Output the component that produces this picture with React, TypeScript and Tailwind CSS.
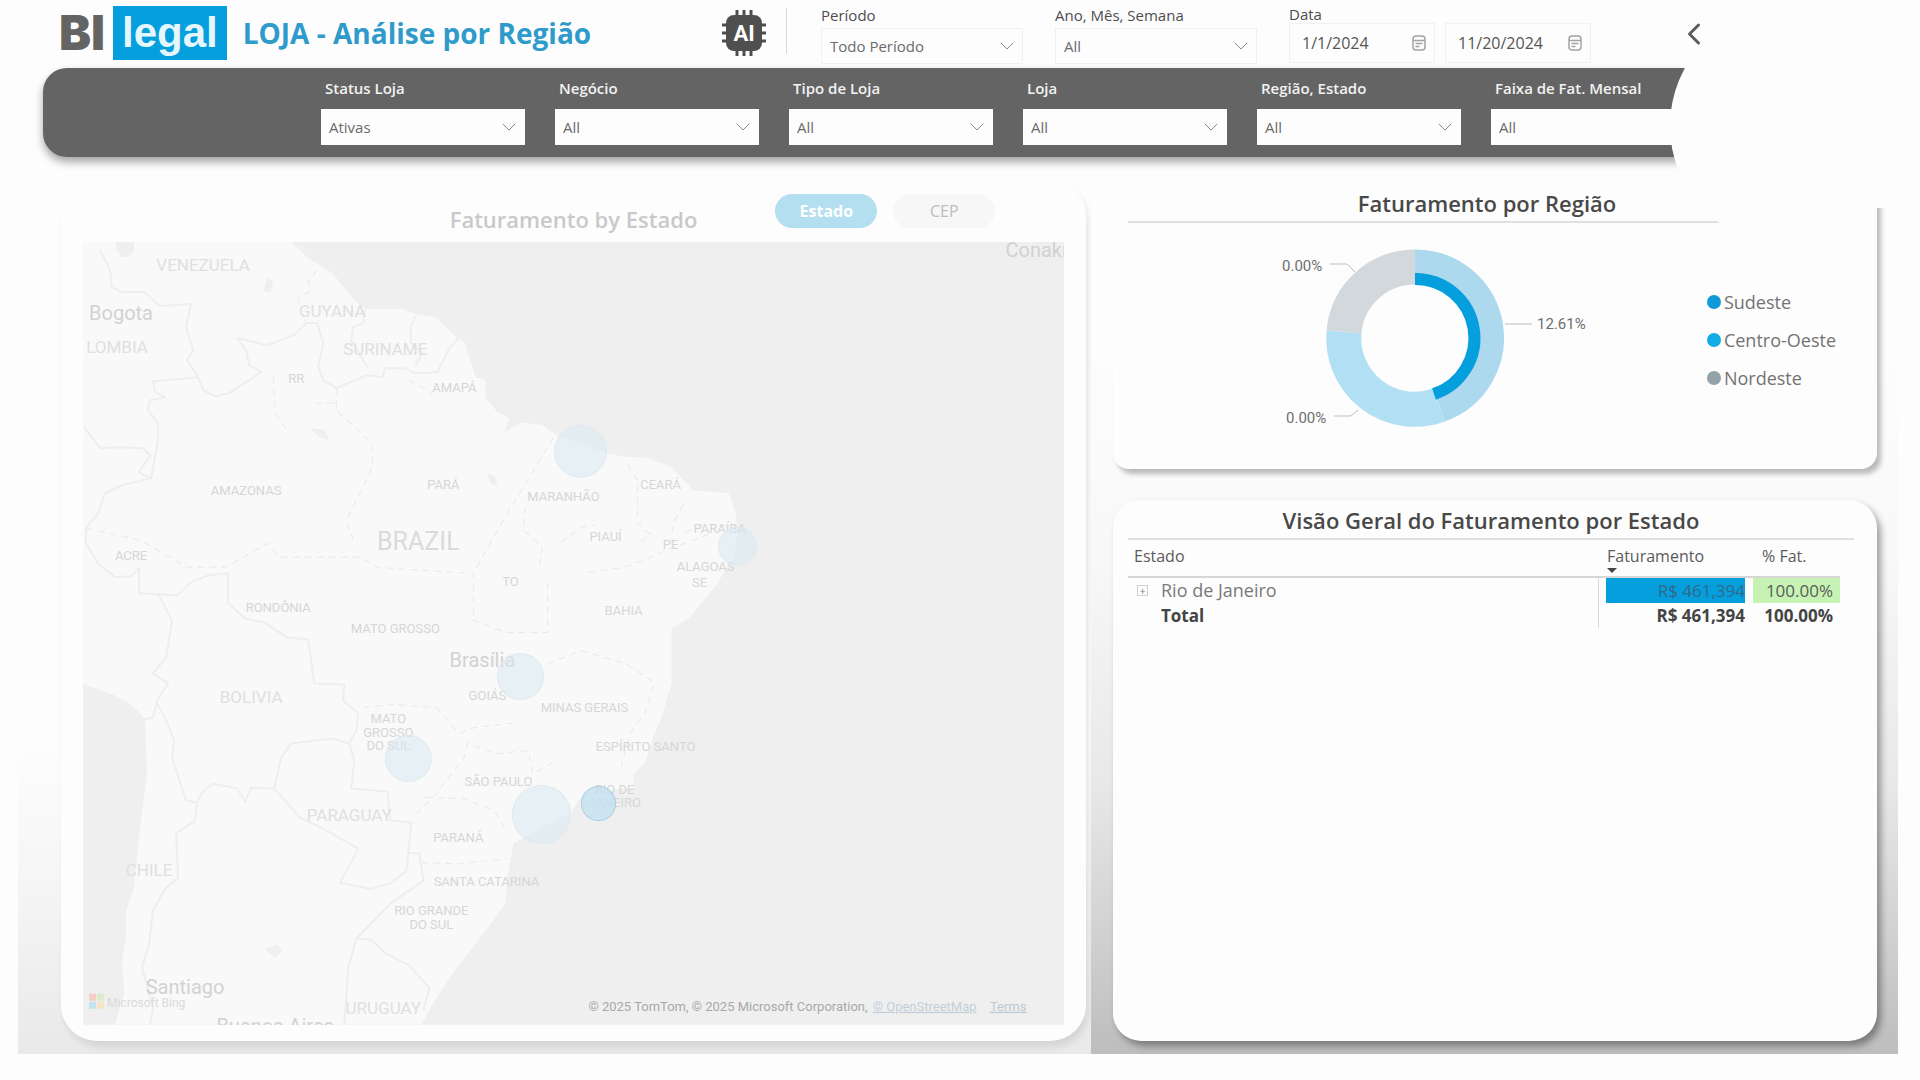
import { ChevronDown, ChevronLeft } from "lucide-react";
import { useState } from "react";

type MapLabel = {
    text: string;
    x: number;
    y: number;
    size: "city" | "country" | "nation" | "state";
};

const storeFilters = [
    { id: "status", label: "Status Loja", value: "Ativas" },
    { id: "negocio", label: "Negócio", value: "All" },
    { id: "tipo", label: "Tipo de Loja", value: "All" },
    { id: "loja", label: "Loja", value: "All" },
    { id: "regiao", label: "Região, Estado", value: "All" },
    { id: "faixa", label: "Faixa de Fat. Mensal", value: "All" },
];

const periodFilters = [
    { id: "periodo", label: "Período", value: "Todo Período" },
    { id: "ano", label: "Ano, Mês, Semana", value: "All" },
];

const legend = [
    { name: "Sudeste", color: "bg-[#0f9bd7]" },
    { name: "Centro-Oeste", color: "bg-[#12abe3]" },
    { name: "Nordeste", color: "bg-[#93a1a9]" },
];

const labelStyles = {
    city: "fill-[#d2d2d2] text-[20px]",
    nation: "fill-[#dadada] text-[25px]",
    country: "fill-[#e0e0e0] text-[17px]",
    state: "fill-[#d6d6d6] text-[13px]",
};

// x is the middle of the label, y its baseline
const mapLabels: MapLabel[] = [
    { text: "VENEZUELA", x: 120, y: 29, size: "country" },
    { text: "Bogota", x: 38, y: 78, size: "city" },
    { text: "LOMBIA", x: 34, y: 111, size: "country" },
    { text: "GUYANA", x: 249, y: 75, size: "country" },
    { text: "SURINAME", x: 302, y: 113, size: "country" },
    { text: "RR", x: 213, y: 141, size: "state" },
    { text: "AMAPÁ", x: 371, y: 150, size: "state" },
    { text: "AMAZONAS", x: 163, y: 253, size: "state" },
    { text: "PARÁ", x: 360, y: 247, size: "state" },
    { text: "MARANHÃO", x: 480, y: 259, size: "state" },
    { text: "CEARÁ", x: 577, y: 247, size: "state" },
    { text: "PARAÍBA", x: 636, y: 291, size: "state" },
    { text: "PIAUÍ", x: 522, y: 299, size: "state" },
    { text: "PE", x: 587, y: 307, size: "state" },
    { text: "ALAGOAS", x: 622, y: 329, size: "state" },
    { text: "SE", x: 616, y: 345, size: "state" },
    { text: "BAHIA", x: 540, y: 373, size: "state" },
    { text: "BRAZIL", x: 335, y: 308, size: "nation" },
    { text: "ACRE", x: 48, y: 318, size: "state" },
    { text: "TO", x: 427, y: 344, size: "state" },
    { text: "RONDÔNIA", x: 195, y: 370, size: "state" },
    { text: "MATO GROSSO", x: 312, y: 391, size: "state" },
    { text: "Brasília", x: 399, y: 425, size: "city" },
    { text: "GOIÁS", x: 404, y: 458, size: "state" },
    { text: "MINAS GERAIS", x: 501, y: 470, size: "state" },
    { text: "BOLIVIA", x: 168, y: 461, size: "country" },
    { text: "MATO", x: 305, y: 481, size: "state" },
    { text: "GROSSO", x: 305, y: 494, size: "state" },
    { text: "DO SUL", x: 305, y: 507, size: "state" },
    { text: "ESPÍRITO SANTO", x: 562, y: 508, size: "state" },
    { text: "SÃO PAULO", x: 415, y: 543, size: "state" },
    { text: "RIO DE", x: 531, y: 551, size: "state" },
    { text: "JANEIRO", x: 531, y: 564, size: "state" },
    { text: "PARAGUAY", x: 266, y: 578, size: "country" },
    { text: "PARANÁ", x: 375, y: 599, size: "state" },
    { text: "CHILE", x: 66, y: 633, size: "country" },
    { text: "SANTA CATARINA", x: 403, y: 643, size: "state" },
    { text: "RIO GRANDE", x: 348, y: 672, size: "state" },
    { text: "DO SUL", x: 348, y: 686, size: "state" },
    { text: "Santiago", x: 102, y: 751, size: "city" },
    { text: "URUGUAY", x: 300, y: 771, size: "country" },
    { text: "Buenos Aires", x: 192, y: 790, size: "city" },
    { text: "Conakry", x: 958, y: 15, size: "city" },
];

const countryBorders = [
    "M17 8 27 28 29 45 39 50 61 50 77 64 108 62 103 85 110 108 104 118 115 135 120 148 132 154 146 151 166 138 178 130 166 123 163 108 154 96 184 103 211 93 223 81 234 81 240 101 235 125 240 138 253 146 284 133 299 135 302 126 321 126 332 131 354 130 366 106 375 96",
    "M282 67 280 81 270 85 268 98 284 125",
    "M333 73 327 85 328 101 339 111 332 124",
    "M115 135 104 136 70 139 72 150 82 155 67 158 65 168 75 181 75 198 68 236 56 230 67 213 60 206 36 205 17 206 1 185",
    "M68 236 39 243 22 251 15 271 3 286 3 301 15 321 32 335 48 334 56 326 56 351 94 353 108 340 125 333 145 331 145 361 162 376 181 380 204 395 225 397 231 441 261 442 260 458 275 471 273 488 266 501 271 518 268 546 304 549 307 578 328 580 325 610 323 628 307 641 287 646 257 640 275 606 238 585 217 575 191 546 198 515 208 501 248 496 266 501",
    "M76 353 89 378 83 415 70 431 85 441 74 458 70 475 62 477",
    "M74 461 82 475 91 498 89 515 103 558 114 560 118 551 129 541 154 546 162 559 168 545 191 546",
    "M114 560 112 578 93 591 95 635 82 646 70 668 66 701 59 725 70 765 67 782",
    "M325 610 336 611 340 638 307 661 273 696 265 725 261 782",
    "M273 696 288 697 303 711 326 723 346 745 340 768",
];

const stateBorders = [
    "M234 28 225 40 227 49 215 56 218 71 223 81",
    "M253 146 253 168 289 201 289 225 263 278 270 298",
    "M3 286 58 298 104 325 142 325 184 301 197 315 277 315 294 325 387 331",
    "M190 135 192 171 204 188 M232 161 253 161",
    "M325 138 345 148 352 160",
    "M470 195 452 225 418 281 390 331 390 378 422 390 464 390 464 341",
    "M442 265 440 288 459 305 456 325 M477 300 500 284 512 283",
    "M544 222 554 238 554 281 567 292 556 300",
    "M600 262 590 280 588 300 M602 290 620 282 652 284",
    "M505 330 540 325 560 318 585 307 630 290",
    "M464 421 491 411 496 408 542 421 571 440 561 471 546 491 538 525",
    "M280 465 310 462 353 465 376 491 391 485 434 480",
    "M376 521 353 551 334 570 M342 555 380 556 411 568 424 590",
    "M380 518 384 501 414 511 445 508 449 531 470 520",
    "M338 620 376 621 424 616",
];

const bubbles = [
    { x: 497, y: 209, r: 26 },
    { x: 654, y: 304, r: 19 },
    { x: 437, y: 434, r: 23 },
    { x: 325, y: 516, r: 23 },
    { x: 458, y: 572, r: 29 },
];

function Logo() {
    return (
        <div className="flex items-center gap-2 font-bold">
            <span className="font-['Inter',sans-serif] text-[48px] leading-[54px] font-black text-[#646464]">
                BI
            </span>
            <span className="bg-[#069fdd] px-[9px] font-['Liberation_Sans',sans-serif] text-[42px] leading-[54px] text-[#e6f6fd]">
                legal
            </span>
        </div>
    );
}

function ChipIcon() {
    return (
        <svg viewBox="0 0 44 46" className="h-[46px] w-11 shrink-0">
            <path
                d="M15 0v46M22 0v46M29 0v46M0 15h44M0 23h44M0 31h44"
                className="stroke-[#4f4f4f]"
                strokeWidth="3"
            />
            <rect x="4" y="5" width="36" height="36" rx="8" className="fill-[#4f4f4f]" />
            <text
                x="22"
                y="31"
                textAnchor="middle"
                className="fill-white font-['Roboto',sans-serif] text-[22px] font-bold"
            >
                AI
            </text>
        </svg>
    );
}

function CalendarIcon() {
    return (
        <svg viewBox="0 0 16 16" fill="none" className="size-4 shrink-0 stroke-[#a3a3a3]">
            <rect x="2" y="1" width="12" height="14" rx="3" strokeWidth="1.5" />
            <path d="M2 5.5h12M4.500 8.500h7M4.500 11.500h4" strokeWidth="1.5" />
        </svg>
    );
}

function FilterSelect({
    id,
    label,
    value,
    dark = false,
}: {
    id: string;
    label: string;
    value: string;
    dark?: boolean;
}) {
    return (
        <div className={dark ? "w-[204px] shrink-0" : "w-[202px] shrink-0"}>
            <label
                htmlFor={id}
                className={
                    dark
                        ? "block pl-1 text-[15px] leading-5 font-semibold text-[#f2f2f2]"
                        : "block text-[15px] leading-5 text-[#4d4d4d]"
                }
            >
                {label}
            </label>
            <div className={dark ? "mt-[11px] grid items-center" : "mt-[3px] grid items-center"}>
                <select
                    id={id}
                    className={
                        dark
                            ? "col-start-1 row-start-1 h-9 appearance-none bg-[#fdfdfd] px-2 text-[15px] text-[#6b6b6b]"
                            : "col-start-1 row-start-1 h-9 appearance-none border border-[#f1f1f1] bg-[#fdfdfd] px-2 text-[15px] text-[#6b6b6b]"
                    }
                >
                    <option>{value}</option>
                </select>
                <ChevronDown
                    strokeWidth={1}
                    className="pointer-events-none col-start-1 row-start-1 mr-1 size-6 justify-self-end text-[#8a8a8a]"
                />
            </div>
        </div>
    );
}

function DateInput({ label, value }: { label: string; value: string }) {
    return (
        <div className="flex h-10 w-[146px] items-center border border-[#f1f1f1] pr-[7px] pl-3">
            <input
                aria-label={label}
                defaultValue={value}
                className="w-full min-w-0 bg-transparent text-[16px] text-[#555]"
            />
            <CalendarIcon />
        </div>
    );
}

function SalesMap() {
    return (
        <svg viewBox="0 0 980 782" className="w-full font-['Roboto',sans-serif]">
            <rect width="980" height="782" className="fill-[#efefef]" />
            <path
                d="M0 0H208L225 16 249 31 273 60 282 67 318 67 337 73 352 75 373 95 382 101 392 135 402 138 402 155 414 170 426 176 421 190 438 180 459 183 473 193 523 211 545 215 563 215 588 225 609 248 645 251 652 271 654 291 650 315 631 345 606 375 588 386 588 441 578 475 571 491 561 521 550 531 550 545 500 550 487 571 453 588 430 601 424 635 422 661 397 695 369 731 353 755 338 782H32L41 751 39 718 43 695 43 668 51 645 57 585 64 531 62 485 62 476 48 462 32 453 0 441Z"
                className="fill-[#f9f9f9]"
            />
            <path
                d="M33 0h18v9l-6 6h-6l-6-7zM184 36l6 3-3 12-7-2zM228 186l14 2 4 10-12-4zM404 231l8 4 2 9-7-3zM181 706l12-4 7 5-8 8z"
                className="fill-[#efefef]"
            />
            {countryBorders.map((d) => (
                <path key={d} d={d} fill="none" strokeWidth="2" strokeLinejoin="round" className="stroke-[#eeeeee]" />
            ))}
            {stateBorders.map((d) => (
                <path key={d} d={d} fill="none" strokeWidth="1" strokeDasharray="7 5" className="stroke-[#e9e9e9]" />
            ))}
            {mapLabels.map((label) => (
                <text
                    key={`${label.text}-${label.y}`}
                    x={label.x}
                    y={label.y}
                    textAnchor="middle"
                    className={labelStyles[label.size]}
                >
                    {label.text}
                </text>
            ))}
            {bubbles.map((b) => (
                <circle
                    key={b.x}
                    cx={b.x}
                    cy={b.y}
                    r={b.r}
                    className="fill-[#d9e9f1]/55 stroke-[#dfeaf0]"
                />
            ))}
            <circle cx="515" cy="561" r="17" className="fill-[#c4e1f1]/80 stroke-[#aacfe4]" />
            <g>
                <rect x="6" y="751" width="7" height="7" className="fill-[#f6cfc8]" />
                <rect x="14" y="751" width="7" height="7" className="fill-[#dcebcb]" />
                <rect x="6" y="759" width="7" height="7" className="fill-[#c3e3f4]" />
                <rect x="14" y="759" width="7" height="7" className="fill-[#f8e3c4]" />
                <text x="24" y="764" className="fill-[#d9d9d9] text-[12px]">
                    Microsoft Bing
                </text>
            </g>
            <text x="505" y="768" className="fill-[#a9a9a9] text-[13px]">
                © 2025 TomTom, © 2025 Microsoft Corporation,
            </text>
            <a href="#osm">
                <text x="789" y="768" className="fill-[#c3cfd8] text-[13px] underline">
                    © OpenStreetMap
                </text>
            </a>
            <a href="#terms">
                <text x="906" y="768" className="fill-[#bccad4] text-[13px] underline">
                    Terms
                </text>
            </a>
        </svg>
    );
}

function RegionDonut() {
    return (
        <svg viewBox="0 0 340 190" className="w-[340px] shrink-0 text-[15px]">
            <g transform="translate(149 96)" fill="none">
                <path d="M0 -71A71 71 0 0 1 24 67" strokeWidth="35" className="stroke-[#acd9ee]" />
                <path d="M24 67A71 71 0 0 1 -71 -6" strokeWidth="35" className="stroke-[#b1dff3]" />
                <path d="M-71 -6A71 71 0 0 1 0 -71" strokeWidth="35" className="stroke-[#d3d8dc]" />
                <path d="M0 -59A59 59 0 0 1 19 56" strokeWidth="12" className="stroke-[#069fdd]" />
                <path d="M-85 -74h17l8 8M-81 78h17l7 -6M90 -14h27" className="stroke-[#bdbdbd]" />
            </g>
            <g className="fill-[#6e6e6e] font-['Roboto',sans-serif]">
                <text x="16" y="29">0.00%</text>
                <text x="20" y="181">0.00%</text>
                <text x="271" y="87">12.61%</text>
            </g>
        </svg>
    );
}

function StateTable() {
    return (
        <table className="mr-[22px] border-collapse text-[17px] leading-[25px] text-[#5a5a5a]">
            <thead>
                <tr className="h-[37px] border-b-2 border-[#d6d6d6] text-left align-top text-[16px] leading-6">
                    <th className="pt-1 pl-[6px] font-normal">Estado</th>
                    <th className="w-[155px] pt-1 pl-[9px] font-normal" aria-sort="descending">
                        Faturamento
                        <span className="block h-0 w-0 border-x-[5px] border-t-[5px] border-x-transparent border-t-[#444]" />
                    </th>
                    <th className="w-[87px] pt-1 pl-[9px] font-normal">% Fat.</th>
                </tr>
            </thead>
            <tbody>
                <tr>
                    <td className="border-r border-[#d9d9d9] text-[18px] text-[#7a7a7a]">
                        <div className="flex items-center gap-[13px] pl-[9px]">
                            <button
                                aria-label="Expandir"
                                className="flex size-[11px] items-center justify-center border border-[#d0d0d0] text-[10px] leading-none"
                            >
                                +
                            </button>
                            Rio de Janeiro
                        </div>
                    </td>
                    <td className="pr-2 pl-[7px] text-right text-[#2e6a8a]">
                        <div className="bg-[#069fdd]">R$ 461,394</div>
                    </td>
                    <td className="bg-[#c6f3b4] pr-[7px] text-right">100.00%</td>
                </tr>
                <tr className="font-bold text-[#444]">
                    <td className="border-r border-[#d9d9d9] pl-[33px]">Total</td>
                    <td className="pr-2 text-right">R$ 461,394</td>
                    <td className="pr-[7px] text-right">100.00%</td>
                </tr>
            </tbody>
        </table>
    );
}

export default function App() {
    const [view, setView] = useState("Estado");

    return (
        <div className="relative min-h-screen overflow-hidden bg-[#fdfdfd] pb-[27px] font-['Open_Sans','Noto_Sans',sans-serif]">
            <header className="flex h-[68px]">
                <div className="flex flex-1 items-center pr-5 pb-[2px] pl-[59px]">
                    <Logo />
                    <h1 className="ml-4 text-[28px] leading-9 font-bold whitespace-nowrap text-[#2e9bcb]">
                        LOJA - Análise por Região
                    </h1>
                    <div className="ml-auto">
                        <ChipIcon />
                    </div>
                </div>
                <div className="mt-2 h-[46px] w-px bg-[#dcdcdc]" />
                <div className="flex gap-8 pt-[5px] pl-[34px]">
                    {periodFilters.map((filter) => (
                        <FilterSelect key={filter.id} {...filter} />
                    ))}
                    <div>
                        <div className="text-[15px] leading-[18px] text-[#4d4d4d]">Data</div>
                        <div className="flex gap-[10px]">
                            <DateInput label="Data inicial" value="1/1/2024" />
                            <DateInput label="Data final" value="11/20/2024" />
                        </div>
                    </div>
                </div>
                <button aria-label="Voltar" className="z-10 mr-[208px] ml-[85px] text-[#5c5c5c]">
                    <ChevronLeft strokeWidth={2} className="size-9" />
                </button>
            </header>

            <section className="relative ml-[43px] flex h-[89px] gap-[30px] rounded-l-[24px] bg-[#646464] pt-[10px] pl-[278px] shadow-[0_5px_8px_rgba(0,0,0,0.35)]">
                {storeFilters.map((filter) => (
                    <FilterSelect key={filter.id} {...filter} dark />
                ))}
            </section>
            {/* round cut-out at the end of the filter bar */}
            <div className="absolute top-[6px] right-[10px] z-[5] size-60 rounded-full bg-[#fdfdfd]" />
            <div className="absolute top-[60px] right-0 z-[5] h-[148px] w-[130px] bg-[#fdfdfd]" />

            <main className="mr-[22px] ml-[18px] grid grid-cols-[1073fr_807fr]">
                <section className="bg-[linear-gradient(to_bottom,#fdfdfd_65%,#f6f6f6_80%,#e9e9e9)] pt-[23px] pr-[5px] pb-[13px] pl-[43px]">
                    <div className="rounded-[36px] bg-[#fdfdfd] px-[22px] pb-4 shadow-[3px_6px_7px_rgba(0,0,0,0.09)]">
                        <div className="grid h-[62px] grid-cols-[1fr_auto_1fr] items-start gap-[78px] pt-[14px]">
                            <h2 className="col-start-2 pt-[10px] text-[22px] leading-[30px] font-semibold text-[#c9c9c9]">
                                Faturamento by Estado
                            </h2>
                            <div className="flex gap-4">
                                {["Estado", "CEP"].map((name) => (
                                    <button
                                        key={name}
                                        onClick={() => setView(name)}
                                        className={
                                            view === name
                                                ? "h-[34px] w-[102px] rounded-full bg-[#b3dff1] text-[16px] font-bold text-white"
                                                : "h-[34px] w-[102px] rounded-full bg-[#f7f7f7] text-[16px] text-[#bdbdbd]"
                                        }
                                    >
                                        {name}
                                    </button>
                                ))}
                            </div>
                        </div>
                        <SalesMap />
                    </div>
                </section>

                <section className="flex flex-col gap-[31px] bg-[linear-gradient(to_bottom,#fdfdfd_20%,#f8f8f8_45%,#e8e8e8_70%,#cfcfcf_88%,#bdbdbd)] pt-[13px] pr-[21px] pb-[13px] pl-[22px]">
                    <div className="h-[299px] rounded-[16px] bg-[#fdfdfd] px-[15px] pt-[18px] shadow-[4px_5px_5px_rgba(0,0,0,0.26)]">
                        <h2 className="mr-4 border-b-2 border-[#e0e0e0] pb-[3px] text-center text-[22px] leading-[30px] font-semibold text-[#484848]">
                            Faturamento por Região
                        </h2>
                        <div className="flex justify-between pt-[19px] pr-[26px] pl-[138px]">
                            <RegionDonut />
                            <ul className="space-y-[10px] pt-[46px] text-[18px] leading-[28px] text-[#737373]">
                                {legend.map((item) => (
                                    <li key={item.name} className="flex items-center gap-[3px]">
                                        <span className={`size-[14px] rounded-full ${item.color}`} />
                                        {item.name}
                                    </li>
                                ))}
                            </ul>
                        </div>
                    </div>
                    <div className="flex flex-1 flex-col rounded-[28px] bg-[#fdfdfd] px-[15px] pt-[5px] shadow-[4px_5px_7px_rgba(0,0,0,0.36)]">
                        <h2 className="mr-2 border-b-2 border-[#e0e0e0] pb-[3px] text-center text-[22px] leading-[30px] font-semibold text-[#484848]">
                            Visão Geral do Faturamento por Estado
                        </h2>
                        <StateTable />
                    </div>
                </section>
            </main>
        </div>
    );
}
